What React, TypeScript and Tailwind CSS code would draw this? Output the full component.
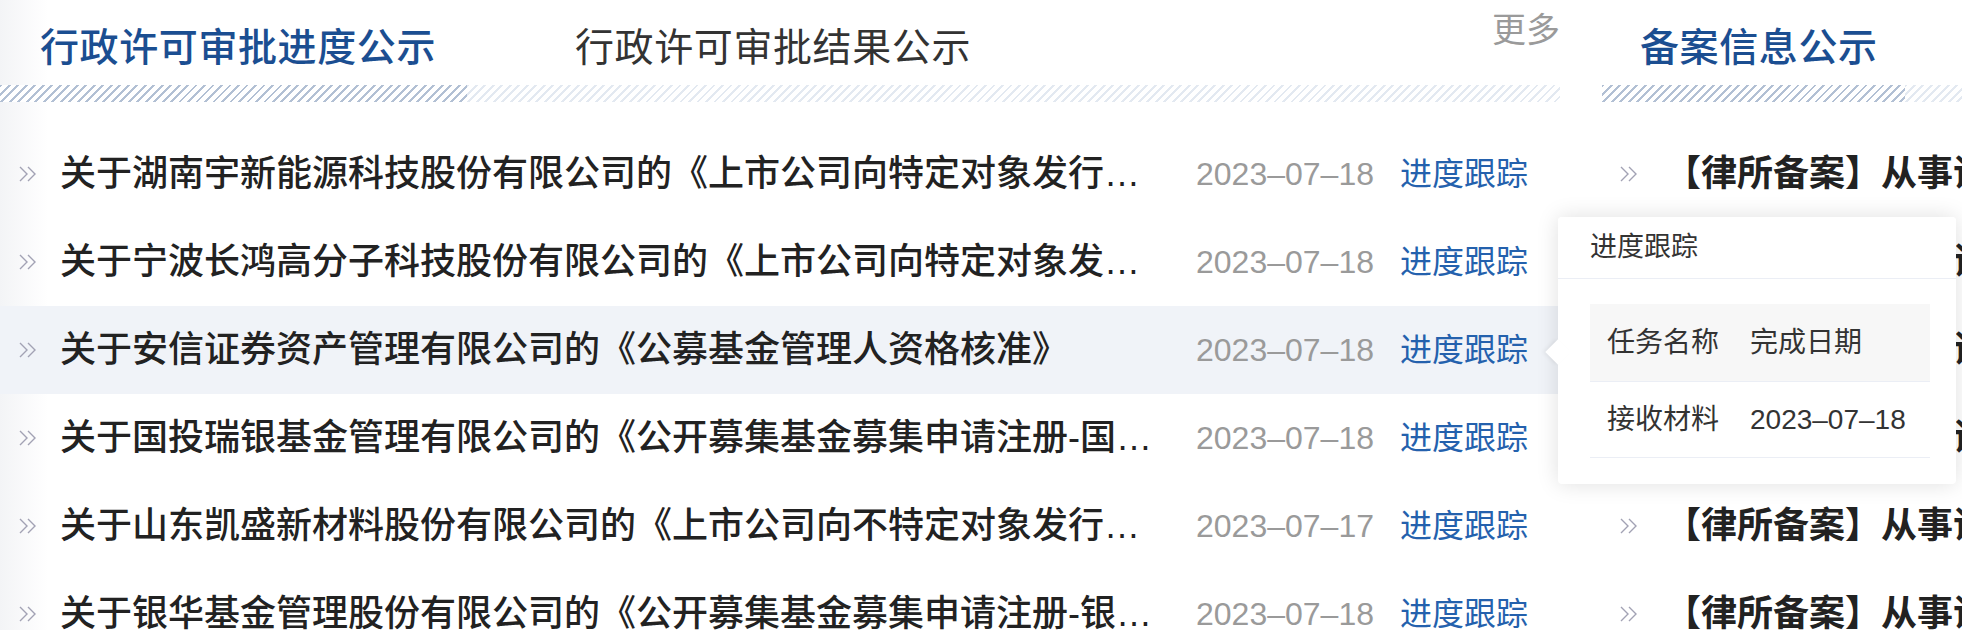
import React from "react";

const leftRows = [
  { title: "关于湖南宇新能源科技股份有限公司的《上市公司向特定对象发行股票核准》", date: "2023–07–18" },
  { title: "关于宁波长鸿高分子科技股份有限公司的《上市公司向特定对象发行股票核准》", date: "2023–07–18" },
  { title: "关于安信证券资产管理有限公司的《公募基金管理人资格核准》", date: "2023–07–18", active: true },
  { title: "关于国投瑞银基金管理有限公司的《公开募集基金募集申请注册-国投瑞银》", date: "2023–07–18" },
  { title: "关于山东凯盛新材料股份有限公司的《上市公司向不特定对象发行可转换公司债券核准》", date: "2023–07–17" },
  { title: "关于银华基金管理股份有限公司的《公开募集基金募集申请注册-银华基金》", date: "2023–07–18" },
];

const rightRows = Array.from({ length: 6 }, () => "【律所备案】从事证券法律业务律师事务所备案");

// 双箭头图标
function DoubleArrow() {
  return (
    <svg width="20" height="18" viewBox="0 0 20 18" fill="none" className="shrink-0">
      <path d="M2 2 L9 9 L2 16" stroke="#a2a2b4" strokeWidth="1.4" />
      <path d="M10 2 L17 9 L10 16" stroke="#a2a2b4" strokeWidth="1.4" />
    </svg>
  );
}

const darkStripe =
  "bg-[image:repeating-linear-gradient(135deg,#b2c0d4_0px,#b2c0d4_2px,#ffffff_2px,#ffffff_6px)]";
const lightStripe =
  "bg-[image:repeating-linear-gradient(135deg,#e3e9f1_0px,#e3e9f1_2px,#ffffff_2px,#ffffff_6px)]";

export default function App() {
  return (
    <div className="relative w-[1962px] h-[630px] overflow-hidden bg-white font-['Liberation_Sans','Noto_Sans_CJK_SC',sans-serif]">
      <div className="flex">
        {/* 左侧：行政许可 */}
        <div className="w-[1560px] shrink-0 bg-[linear-gradient(to_right,#f3f4f6,#ffffff_48px)]">
          <div className="flex items-start h-[85px]">
            <div className="w-[467px] shrink-0 pl-[40px] pt-[28px] text-[39px] leading-[40px] tracking-[0.6px] font-medium text-[#1b4e91]">
              行政许可审批进度公示
            </div>
            <div className="pl-[108px] pt-[28px] text-[39px] leading-[40px] tracking-[0.6px] text-[#333]">
              行政许可审批结果公示
            </div>
            <div className="ml-auto pt-[13px] text-[34px] leading-[34px] text-[#9a9a9a]">更多</div>
          </div>
          <div className="flex h-[17px]">
            <div className={`w-[467px] shrink-0 ${darkStripe}`} />
            <div className={`flex-1 ${lightStripe}`} />
          </div>

          <div className="mt-[28px]">
            {leftRows.map((row, i) => (
              <div
                key={i}
                className={`flex items-center h-[88px] pl-[18px] pr-[32px] ${row.active ? "bg-[#f0f3f8]" : ""}`}
              >
                <DoubleArrow />
                <div className="ml-[22px] flex-1 min-w-0 truncate text-[36px] leading-[44px] font-medium text-[#222]">
                  {row.title}
                </div>
                <div className="ml-[44px] whitespace-nowrap text-[32px] text-[#9a9a9a]">{row.date}</div>
                <div className="ml-[26px] whitespace-nowrap text-[32px] text-[#2461ad]">进度跟踪</div>
              </div>
            ))}
          </div>
        </div>

        {/* 右侧：备案信息 */}
        <div className="ml-[42px] w-[700px] shrink-0">
          <div className="flex items-start h-[85px]">
            <div className="w-[303px] shrink-0 pl-[38px] pt-[28px] text-[39px] leading-[40px] tracking-[0.6px] font-medium text-[#1b4e91]">
              备案信息公示
            </div>
          </div>
          <div className="flex h-[17px]">
            <div className={`w-[303px] shrink-0 ${darkStripe}`} />
            <div className={`flex-1 ${lightStripe}`} />
          </div>
          <div className="mt-[28px]">
            {rightRows.map((text, i) => (
              <div key={i} className="flex items-center h-[88px] pl-[17px]">
                <DoubleArrow />
                <div className="ml-[26px] whitespace-nowrap text-[36px] leading-[44px] font-bold text-[#222]">
                  {text}
                </div>
              </div>
            ))}
          </div>
        </div>
      </div>

      {/* 进度跟踪弹出框 */}
      <div className="absolute left-[1558px] top-[217px] w-[398px] bg-white rounded-[4px] shadow-[0_0_22px_rgba(0,0,0,0.13)]">
        <div className="absolute left-[-9px] top-[126px] w-[18px] h-[18px] rotate-45 bg-white shadow-[-2px_2px_4px_rgba(0,0,0,0.05)]" />
        <div className="relative flex items-center h-[62px] pl-[32px] border-b border-[#ebeef5] text-[27px] text-[#333] bg-white rounded-t-[4px]">
          进度跟踪
        </div>
        <div className="relative pl-[32px] pr-[26px] pt-[25px] pb-[26px]">
          <div className="flex items-center h-[78px] bg-[#f7f7f7] border-b border-[#ebeef5] text-[28px] text-[#333]">
            <div className="w-[143px] pl-[17px]">任务名称</div>
            <div className="pl-[17px]">完成日期</div>
          </div>
          <div className="flex items-center h-[76px] border-b border-[#ebeef5] text-[28px] text-[#333]">
            <div className="w-[143px] pl-[17px]">接收材料</div>
            <div className="pl-[17px] whitespace-nowrap">2023–07–18</div>
          </div>
        </div>
      </div>
    </div>
  );
}
